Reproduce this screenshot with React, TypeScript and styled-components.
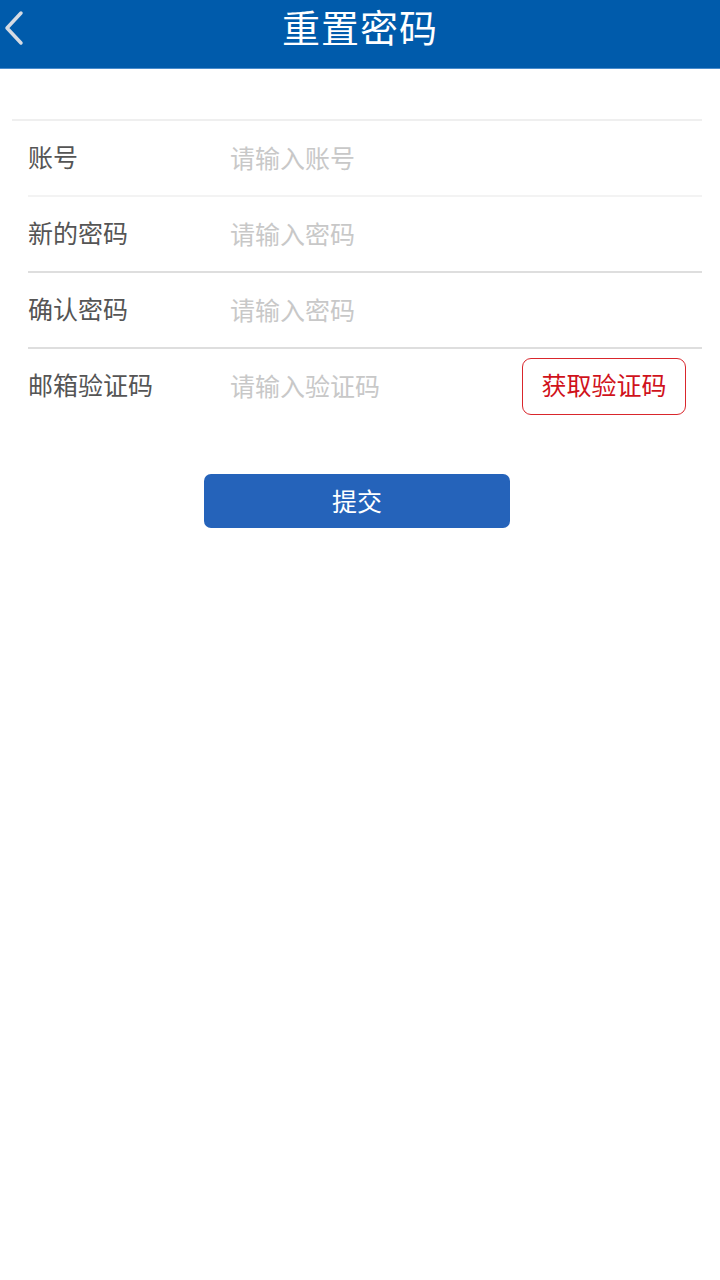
import styled, { createGlobalStyle } from "styled-components";

const GlobalStyle = createGlobalStyle`
  body {
    margin: 0;
    background: #fff;
    font-family: "Noto Sans CJK SC", "Noto Sans", sans-serif;
  }
`;

const fields = [
  { label: "账号", placeholder: "请输入账号", line: "#f3f3f3" },
  { label: "新的密码", placeholder: "请输入密码", line: "#dedede" },
  { label: "确认密码", placeholder: "请输入密码", line: "#dedede" },
];

export default function App() {
  return (
    <STPage>
      <GlobalStyle />
      <STHeader>
        <STBack aria-label="返回">
          <svg width="26" height="36" viewBox="0 0 26 36">
            <path
              d="M21 3 L7 18 L21 33"
              fill="none"
              stroke="#d6dbe3"
              strokeWidth="3.5"
              strokeLinecap="round"
              strokeLinejoin="round"
            />
          </svg>
        </STBack>
        <STTitle>重置密码</STTitle>
      </STHeader>

      <STForm>
        {fields.map((f) => (
          <STRow key={f.label} $line={f.line}>
            <STLabel>{f.label}</STLabel>
            <STInput placeholder={f.placeholder} />
          </STRow>
        ))}
        <STRow $line="transparent">
          <STLabel>邮箱验证码</STLabel>
          <STInput placeholder="请输入验证码" />
          <STCodeButton>获取验证码</STCodeButton>
        </STRow>
      </STForm>

      <STSubmit>提交</STSubmit>
    </STPage>
  );
}

const STPage = styled.div`
  width: 720px;
  min-height: 1280px;
  display: flex;
  flex-direction: column;
`;

const STHeader = styled.header`
  position: relative;
  height: 68px;
  background: #005bab;
  border-bottom: 1px solid #4a8ccc;
  display: flex;
  align-items: flex-start;
  justify-content: center;
`;

const STBack = styled.button`
  position: absolute;
  left: 0;
  top: 10px;
  padding: 0;
  border: none;
  background: none;
  display: flex;
`;

const STTitle = styled.h1`
  margin: 3px 0 0;
  color: #fff;
  font-size: 38px;
  font-weight: 400;
  letter-spacing: 1px;
  line-height: 46px;
`;

const STForm = styled.div`
  margin: 50px 18px 0 12px;
  border-top: 2px solid #efefef;
  padding-left: 16px;
`;

const STRow = styled.div<{ $line: string }>`
  height: 74px;
  display: flex;
  align-items: center;
  border-bottom: 2px solid ${(p) => p.$line};
`;

const STLabel = styled.span`
  width: 202px;
  flex-shrink: 0;
  font-size: 25px;
  line-height: 1;
  padding-bottom: 3px;
  color: #555;
`;

const STInput = styled.input`
  flex: 1;
  min-width: 0;
  border: none;
  outline: none;
  padding: 0 0 3px;
  font-family: inherit;
  font-size: 25px;
  color: #333;
  background: transparent;
  &::placeholder {
    color: #c8c8c8;
  }
`;

const STCodeButton = styled.button`
  width: 164px;
  height: 57px;
  margin-right: 16px;
  flex-shrink: 0;
  border: 1.5px solid #d9262c;
  border-radius: 9px;
  background: #fff;
  color: #d0121b;
  font-family: inherit;
  font-size: 25px;
  line-height: 1;
  padding: 0 0 3px;
`;

const STSubmit = styled.button`
  align-self: flex-start;
  margin: 49px 0 0 204px;
  width: 306px;
  height: 54px;
  border: none;
  border-radius: 7px;
  background: #2563ba;
  color: #fff;
  font-family: inherit;
  font-size: 25px;
  line-height: 1;
  padding: 0 0 2px;
`;
